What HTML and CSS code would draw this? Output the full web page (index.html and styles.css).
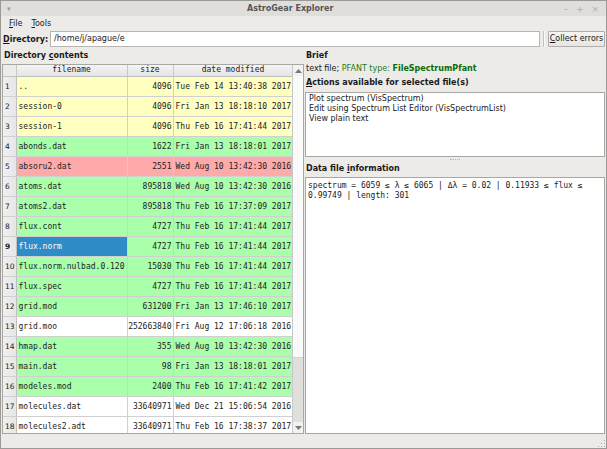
FILE: index.html
```html
<!DOCTYPE html>
<html>
<head>
<meta charset="utf-8">
<title>AstroGear Explorer</title>
<link rel="stylesheet" href="styles.css">
</head>
<body>
<div class="window">
  <div class="titlebar">
    <span class="tb-menu">&#9662;</span>
    <span class="tb-title">AstroGear Explorer</span>
    <span class="tb-buttons"><span>&#8211;</span><span>+</span><span>&#215;</span></span>
  </div>
  <div class="menubar">
    <span class="menu"><u>F</u>ile</span>
    <span class="menu"><u>T</u>ools</span>
  </div>
  <div class="dirbar">
    <span class="dirlabel"><u>D</u>irectory:</span>
    <div class="dirinput">/home/j/apague/e</div>
    <div class="vsep"></div>
    <div class="button"><u>C</u>ollect errors</div>
  </div>
  <div class="main">
    <div class="leftpane">
      <div class="label">Directory <u>c</u>ontents</div>
      <div class="tablebox">
        <div class="tablearea">
          <table class="grid">
            <colgroup><col class="c0"><col class="c1"><col class="c2"><col class="c3"></colgroup>
            <thead>
              <tr><th class="corner"></th><th>filename</th><th>size</th><th>date modified</th></tr>
            </thead>
            <tbody>
              <tr class="yellow"><td class="rh">1</td><td>..</td><td class="num">4096</td><td>Tue Feb 14 13:40:38 2017</td></tr>
              <tr class="yellow"><td class="rh">2</td><td>session-0</td><td class="num">4096</td><td>Fri Jan 13 18:18:10 2017</td></tr>
              <tr class="yellow"><td class="rh">3</td><td>session-1</td><td class="num">4096</td><td>Thu Feb 16 17:41:44 2017</td></tr>
              <tr class="green"><td class="rh">4</td><td>abonds.dat</td><td class="num">1622</td><td>Fri Jan 13 18:18:01 2017</td></tr>
              <tr class="red"><td class="rh">5</td><td>absoru2.dat</td><td class="num">2551</td><td>Wed Aug 10 13:42:30 2016</td></tr>
              <tr class="green"><td class="rh">6</td><td>atoms.dat</td><td class="num">895818</td><td>Wed Aug 10 13:42:30 2016</td></tr>
              <tr class="green"><td class="rh">7</td><td>atoms2.dat</td><td class="num">895818</td><td>Thu Feb 16 17:37:09 2017</td></tr>
              <tr class="green"><td class="rh">8</td><td>flux.cont</td><td class="num">4727</td><td>Thu Feb 16 17:41:44 2017</td></tr>
              <tr class="green"><td class="rh sel">9</td><td class="selected">flux.norm</td><td class="num">4727</td><td>Thu Feb 16 17:41:44 2017</td></tr>
              <tr class="green"><td class="rh">10</td><td>flux.norm.nulbad.0.120</td><td class="num">15030</td><td>Thu Feb 16 17:41:44 2017</td></tr>
              <tr class="green"><td class="rh">11</td><td>flux.spec</td><td class="num">4727</td><td>Thu Feb 16 17:41:44 2017</td></tr>
              <tr class="green"><td class="rh">12</td><td>grid.mod</td><td class="num">631200</td><td>Fri Jan 13 17:46:10 2017</td></tr>
              <tr class="white"><td class="rh">13</td><td>grid.moo</td><td class="num">252663840</td><td>Fri Aug 12 17:06:18 2016</td></tr>
              <tr class="green"><td class="rh">14</td><td>hmap.dat</td><td class="num">355</td><td>Wed Aug 10 13:42:30 2016</td></tr>
              <tr class="green"><td class="rh">15</td><td>main.dat</td><td class="num">98</td><td>Fri Jan 13 18:18:01 2017</td></tr>
              <tr class="green"><td class="rh">16</td><td>modeles.mod</td><td class="num">2400</td><td>Thu Feb 16 17:41:42 2017</td></tr>
              <tr class="white"><td class="rh">17</td><td>molecules.dat</td><td class="num">33640971</td><td>Wed Dec 21 15:06:54 2016</td></tr>
              <tr class="white"><td class="rh">18</td><td>molecules2.adt</td><td class="num">33640971</td><td>Thu Feb 16 17:38:37 2017</td></tr>
            </tbody>
          </table>
        </div>
        <div class="scrollbar">
          <div class="sb-arrow"><svg width="7" height="4" viewBox="0 0 7 4"><path d="M0 4 L3.5 0 L7 4 Z" fill="#777"/></svg></div>
          <div class="sb-track"><div class="sb-thumb"></div></div>
          <div class="sb-arrow"><svg width="7" height="4" viewBox="0 0 7 4"><path d="M0 0 L3.5 4 L7 0 Z" fill="#777"/></svg></div>
        </div>
      </div>
    </div>
    <div class="rightpane">
      <div class="label lbl-brief">Brief</div>
      <div class="brief">text file; <span class="g">PFANT type: </span><b class="gb">FileSpectrumPfant</b></div>
      <div class="label lbl-actions"><u>A</u>ctions available for selected file(s)</div>
      <div class="listbox">
        <div>Plot spectrum (VisSpectrum)</div>
        <div>Edit using Spectrum List Editor (VisSpectrumList)</div>
        <div>View plain text</div>
      </div>
      <div class="hsplit"><span class="dots"></span></div>
      <div class="label lbl-data">Data file <u>i</u>nformation</div>
      <div class="textbox">spectrum = 6059 ≤ λ ≤ 6065 | Δλ = 0.02 | 0.11933 ≤ flux ≤<br>0.99749 | length: 301</div>
    </div>
  </div>
  <div class="statusbar"><span class="grip"></span></div>
</div>
</body>
</html>
```
FILE: styles.css
```css
* { box-sizing: border-box; }
html, body { margin: 0; padding: 0; }
body {
  width: 607px;
  height: 449px;
  background: #edebe7;
  font-family: "DejaVu Sans", sans-serif;
  font-size: 8px;
  color: #1a1a1a;
  overflow: hidden;
}
u { text-decoration: underline; text-underline-offset: 1px; }

.window {
  width: 607px;
  height: 449px;
  display: flex;
  flex-direction: column;
  border: 1px solid #9b9a97;
  background: #edebe7;
}

.titlebar {
  height: 15px;
  flex: none;
  display: flex;
  align-items: center;
  background: #e0dedb;
  color: #777;
}
.tb-menu { font-size: 7px; color: #999; margin-left: 6px; width: 10px; }
.tb-title {
  flex: 1;
  text-align: center;
  font-weight: bold;
  color: #555;
  font-size: 8px;
}
.tb-buttons {
  display: flex;
  gap: 8px;
  margin-right: 7px;
  color: #b0b0b0;
  font-size: 9px;
}

.menubar {
  height: 14px;
  flex: none;
  display: flex;
  align-items: center;
  gap: 9px;
  padding-left: 8px;
}

.dirbar {
  height: 18px;
  flex: none;
  display: flex;
  align-items: center;
  padding: 0 1px 0 2px;
}
.dirlabel { font-weight: bold; width: 47px; }
.dirinput {
  width: 490px;
  height: 16px;
  background: #fff;
  border: 1px solid #b8b6b2;
  padding-left: 3px;
  line-height: 14px;
}
.vsep {
  width: 2px;
  height: 16px;
  border-left: 1px solid #c6c4c0;
  border-right: 1px solid #fafafa;
  margin: 0 3px 0 3px;
}
.button {
  flex: 1;
  height: 16px;
  border: 1px solid #b0aeab;
  border-radius: 1px;
  background: linear-gradient(#f6f5f3, #e8e6e2);
  text-align: center;
  line-height: 14px;
}

.main {
  flex: 1;
  display: flex;
  min-height: 0;
}
.leftpane {
  width: 303px;
  flex: none;
  display: flex;
  flex-direction: column;
  padding: 0 0 1px 1px;
}
.label {
  font-weight: bold;
  height: 14px;
  line-height: 14px;
  padding-left: 2px;
  flex: none;
}
.leftpane .label { height: 16px; line-height: 15px; }

.tablebox {
  flex: 1;
  display: flex;
  border: 1px solid #a9a7a3;
  background: #fff;
  min-height: 0;
  overflow: hidden;
}
.tablearea { width: 290px; overflow: hidden; }

table.grid {
  border-collapse: collapse;
  table-layout: fixed;
  width: 290px;
  font-family: "DejaVu Sans Mono", monospace;
  font-size: 8px;
}
col.c0 { width: 13px; }
col.c1 { width: 111px; }
col.c2 { width: 46px; }
col.c3 { width: 120px; }

thead th {
  height: 11px;
  padding: 0;
  font-weight: normal;
  background: linear-gradient(#f4f4f4, #e4e4e4);
  border-right: 1px solid #c8c8c8;
  border-bottom: 1px solid #c0c0c0;
  text-align: center;
  line-height: 10px;
  color: #222;
}
thead th.corner { background: #ececec; }

tbody td {
  height: 20px;
  padding: 0 2px;
  border-right: 1px solid #d0d0d0;
  border-bottom: 1px solid #d0d0d0;
  white-space: nowrap;
  overflow: hidden;
  color: #222;
}
tbody td.num { text-align: right; padding: 0 1px 0 0; }
tbody td.rh {
  font-family: "DejaVu Sans", sans-serif;
  border-right: 1px solid #c0c0c0;
  padding: 0 0 0 2px;
  font-size: 7.5px;
}
tbody td.rh.sel { font-weight: bold; }

tr.yellow td { background: #ffffc0; }
tr.green td { background: #aaffaa; }
tr.red td { background: #ffaaaa; }
tr.white td { background: #ffffff; }
tr td.rh { background: linear-gradient(90deg, #f0f0f0, #e6e6e6); }
tr td.selected { background: #308cc6; color: #fff; }

.scrollbar {
  width: 11px;
  flex: none;
  display: flex;
  flex-direction: column;
  border-left: 1px solid #c8c8c8;
  background: #fafafa;
}
.sb-arrow {
  height: 11px;
  display: flex;
  align-items: center;
  justify-content: center;
  background: #f2f2f2;
}
.sb-track {
  flex: 1;
  display: flex;
  flex-direction: column;
  justify-content: flex-end;
}
.sb-thumb {
  height: 65px;
  background: #e0dfdc;
  border-top: 1px solid #d4d3d0;
}

.rightpane {
  flex: 1;
  display: flex;
  flex-direction: column;
  padding: 0 1px 1px 1px;
}
.rightpane .label { padding-left: 1px; }
.lbl-brief { height: 15px; line-height: 15px; }
.brief { height: 11px; line-height: 11px; padding-left: 1px; }
.brief .g { color: #1f7a1f; }
.brief .gb { color: #0b6b0b; }
.lbl-actions { margin-top: 2px; }

.listbox {
  height: 65px;
  flex: none;
  background: #fff;
  border: 1px solid #a9a7a3;
  padding: 1px 3px;
  line-height: 10px;
  margin-top: 2px;
}
.hsplit {
  height: 5px;
  display: flex;
  justify-content: center;
  align-items: center;
}
.dots {
  width: 10px;
  height: 1px;
  border-top: 1px dotted #b5b3af;
}
.lbl-data { height: 13px; line-height: 13px; }
.textbox {
  flex: 1;
  background: #fff;
  border: 1px solid #a9a7a3;
  font-family: "DejaVu Sans Mono", monospace;
  font-size: 8px;
  line-height: 10px;
  padding: 3px 2px;
  margin-top: 2px;
}

.statusbar {
  height: 13px;
  flex: none;
  position: relative;
}
.grip {
  position: absolute;
  right: 1px;
  bottom: 1px;
  width: 8px;
  height: 8px;
  background-image: radial-gradient(circle, #b0aeaa 0.8px, transparent 1px);
  background-size: 3px 3px;
  clip-path: polygon(100% 0, 100% 100%, 0 100%);
}
```
